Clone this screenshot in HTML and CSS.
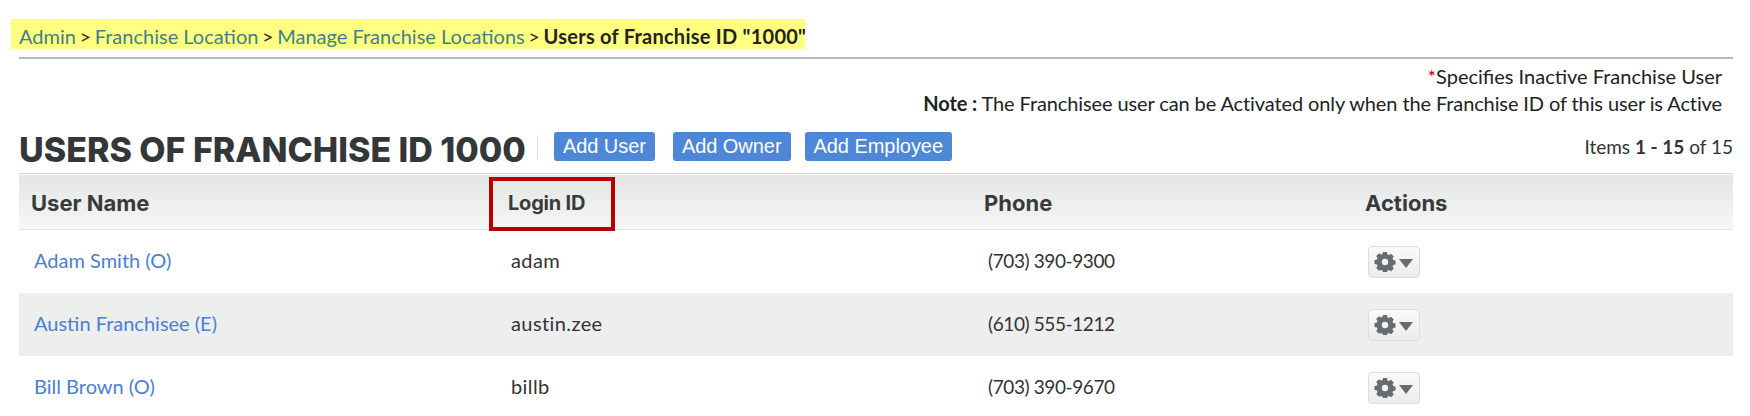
FILE: index.html
```html
<!DOCTYPE html>
<html lang="en">
<head>
<meta charset="utf-8">
<title>Users of Franchise ID 1000</title>
<link rel="stylesheet" href="styles.css">
</head>
<body>
<div class="page">
  <nav class="crumbs"><a href="#">Admin</a> <span class="gt">&gt;</span> <a href="#">Franchise Location</a> <span class="gt">&gt;</span> <a href="#">Manage Franchise Locations</a> <span class="gt">&gt;</span> <b>Users of Franchise ID "1000"</b></nav>
  <div class="rule"></div>
  <div class="notes">
    <p class="legend"><span class="star">*</span>Specifies Inactive Franchise User</p>
    <p><b>Note :</b> The Franchisee user can be Activated only when the Franchise ID of this user is Active</p>
  </div>
  <div class="toolbar">
    <h1>USERS OF FRANCHISE ID 1000</h1>
    <span class="sep"></span>
    <a class="btn first" href="#">Add User</a>
    <a class="btn" href="#">Add Owner</a>
    <a class="btn tight" href="#">Add Employee</a>
    <span class="items">Items <b>1 - 15</b> of 15</span>
  </div>
  <div class="table-wrap">
    <table>
      <colgroup><col class="c1"><col class="c2"><col class="c3"><col class="c4"></colgroup>
      <thead>
        <tr><th>User Name</th><th class="th-login">Login ID</th><th>Phone</th><th>Actions</th></tr>
      </thead>
      <tbody>
        <tr><td class="name"><a href="#">Adam Smith (O)</a></td><td class="login">adam</td><td class="phone">(703) 390-9300</td><td class="act"><button class="gear" type="button"><svg width="40" height="20" viewBox="0 0 40 20"><g fill="#666c70"><path fill-rule="evenodd" d="M8 1h4l.5 2.400 1.400.6 2.100-1.300 2.800 2.800-1.300 2.100.6 1.400 2.400.5v4l-2.400.5-.6 1.400 1.300 2.100-2.800 2.800-2.100-1.300-1.400.6-.5 2.400H8l-.5-2.400-1.400-.6L4 19.800 1.200 17l1.300-2.100-.6-1.400L-.5 13V9l2.400-.5.6-1.400L1.200 5 4 2.200l2.100 1.300 1.400-.6zM10 7.800a3.200 3.200 0 1 0 0 6.400 3.200 3.200 0 0 0 0-6.400z" transform="translate(1 -1)"/><path d="M25 7h14l-7 9z"/></g></svg></button></td></tr>
        <tr class="alt"><td class="name"><a href="#">Austin Franchisee (E)</a></td><td class="login">austin.zee</td><td class="phone">(610) 555-1212</td><td class="act"><button class="gear" type="button"><svg width="40" height="20" viewBox="0 0 40 20"><g fill="#666c70"><path fill-rule="evenodd" d="M8 1h4l.5 2.400 1.400.6 2.100-1.300 2.800 2.800-1.300 2.100.6 1.400 2.400.5v4l-2.400.5-.6 1.400 1.300 2.100-2.800 2.800-2.100-1.300-1.400.6-.5 2.400H8l-.5-2.400-1.400-.6L4 19.800 1.200 17l1.300-2.100-.6-1.400L-.5 13V9l2.400-.5.6-1.400L1.200 5 4 2.200l2.100 1.300 1.400-.6zM10 7.800a3.200 3.200 0 1 0 0 6.400 3.200 3.200 0 0 0 0-6.400z" transform="translate(1 -1)"/><path d="M25 7h14l-7 9z"/></g></svg></button></td></tr>
        <tr><td class="name"><a href="#">Bill Brown (O)</a></td><td class="login">billb</td><td class="phone">(703) 390-9670</td><td class="act"><button class="gear" type="button"><svg width="40" height="20" viewBox="0 0 40 20"><g fill="#666c70"><path fill-rule="evenodd" d="M8 1h4l.5 2.400 1.400.6 2.100-1.300 2.800 2.800-1.300 2.100.6 1.400 2.400.5v4l-2.400.5-.6 1.400 1.300 2.100-2.800 2.800-2.100-1.300-1.400.6-.5 2.400H8l-.5-2.400-1.400-.6L4 19.800 1.200 17l1.300-2.100-.6-1.400L-.5 13V9l2.400-.5.6-1.400L1.200 5 4 2.200l2.100 1.300 1.400-.6zM10 7.800a3.200 3.200 0 1 0 0 6.400 3.200 3.200 0 0 0 0-6.400z" transform="translate(1 -1)"/><path d="M25 7h14l-7 9z"/></g></svg></button></td></tr>
      </tbody>
    </table>
    <div class="callout"></div>
  </div>
</div>
</body>
</html>
```
FILE: styles.css
```css
* { box-sizing: border-box; }
html, body { margin: 0; height: 416px; overflow: hidden; background: #fff; }
body { font-family: Lato, "Noto Sans", sans-serif; font-size: 20px; color: #333; }
.page { padding: 19px 17px 0 19px; }
.crumbs {
  height: 30px; line-height: 34px; margin-left: -8px; padding-left: 8px; width: 794px;
  background: #ffff80; color: #333; white-space: nowrap;
}
.crumbs a { color: #3f7f8c; text-decoration: none; }
.crumbs .gt { margin: 0 -1.5px; }
.crumbs b { color: #222; font-weight: 700; letter-spacing: 0.25px; }
.rule { height: 2px; margin-top: 8px; background: #b9b9b9; }
.notes { height: 73px; padding: 4px 11px 0 0; text-align: right; color: #222; }
.notes p { margin: 0; line-height: 27px; letter-spacing: -0.11px; }
.notes p.legend { letter-spacing: 0; }
.star { color: #c00; }
.toolbar { display: flex; align-items: center; height: 29px; }
h1 { margin: 0; font-family: Inter, sans-serif; font-size: 34px; font-weight: 800; line-height: 32px; color: #33373a; position: relative; top: 3px; white-space: nowrap; }
.sep { width: 1px; height: 24px; margin-left: 11px; background: #ddd; }
.btn {
  display: block; height: 29px; line-height: 28px; padding: 0 9px; margin-left: 18px; border-radius: 3px;
  background: #4e86d8; color: #fff; font-family: "Liberation Sans", sans-serif; font-size: 20px; letter-spacing: -0.05px; text-decoration: none; white-space: nowrap;
}
.btn.first { margin-left: 16px; }
.btn.tight { margin-left: 14px; }
.items { margin-left: auto; font-size: 19px; color: #333; }
.table-wrap { position: relative; margin-top: 12px; }
table { width: 100%; border-collapse: collapse; table-layout: fixed; }
.c1 { width: 477px; } .c2 { width: 476px; } .c3 { width: 381px; } .c4 { width: 380px; }
thead tr { height: 56px; background: linear-gradient(#e4e5e5, #f6f6f6); border-top: 1px solid #d8d8d8; border-bottom: 1px solid #e4e4e4; }
th { padding: 2px 12px 0; text-align: left; font-family: Inter, sans-serif; font-size: 22px; font-weight: 700; color: #383b3d; }
th.th-login { font-size: 20px; letter-spacing: -0.2px; }
tbody tr { height: 63px; }
tbody tr.alt { background: #edeeee; }
td { padding: 0 15px; font-size: 20px; color: #333; }
td a { color: #4a7fd6; text-decoration: none; }
td.name { padding-bottom: 2px; }
td.login { letter-spacing: 0.4px; padding-bottom: 2px; }
td.phone { font-size: 19px; letter-spacing: -0.4px; padding-left: 16px; padding-bottom: 2px; }
td.act { padding-top: 1px; }
.gear {
  display: flex; align-items: center; justify-content: center; width: 52px; height: 32px; padding: 0;
  border: 1px solid #ddd; border-radius: 4px; background: linear-gradient(#fafafa, #ececec);
}
.callout { position: absolute; left: 470px; top: 4px; width: 126px; height: 54px; border: 4px solid #b70000; }
```
